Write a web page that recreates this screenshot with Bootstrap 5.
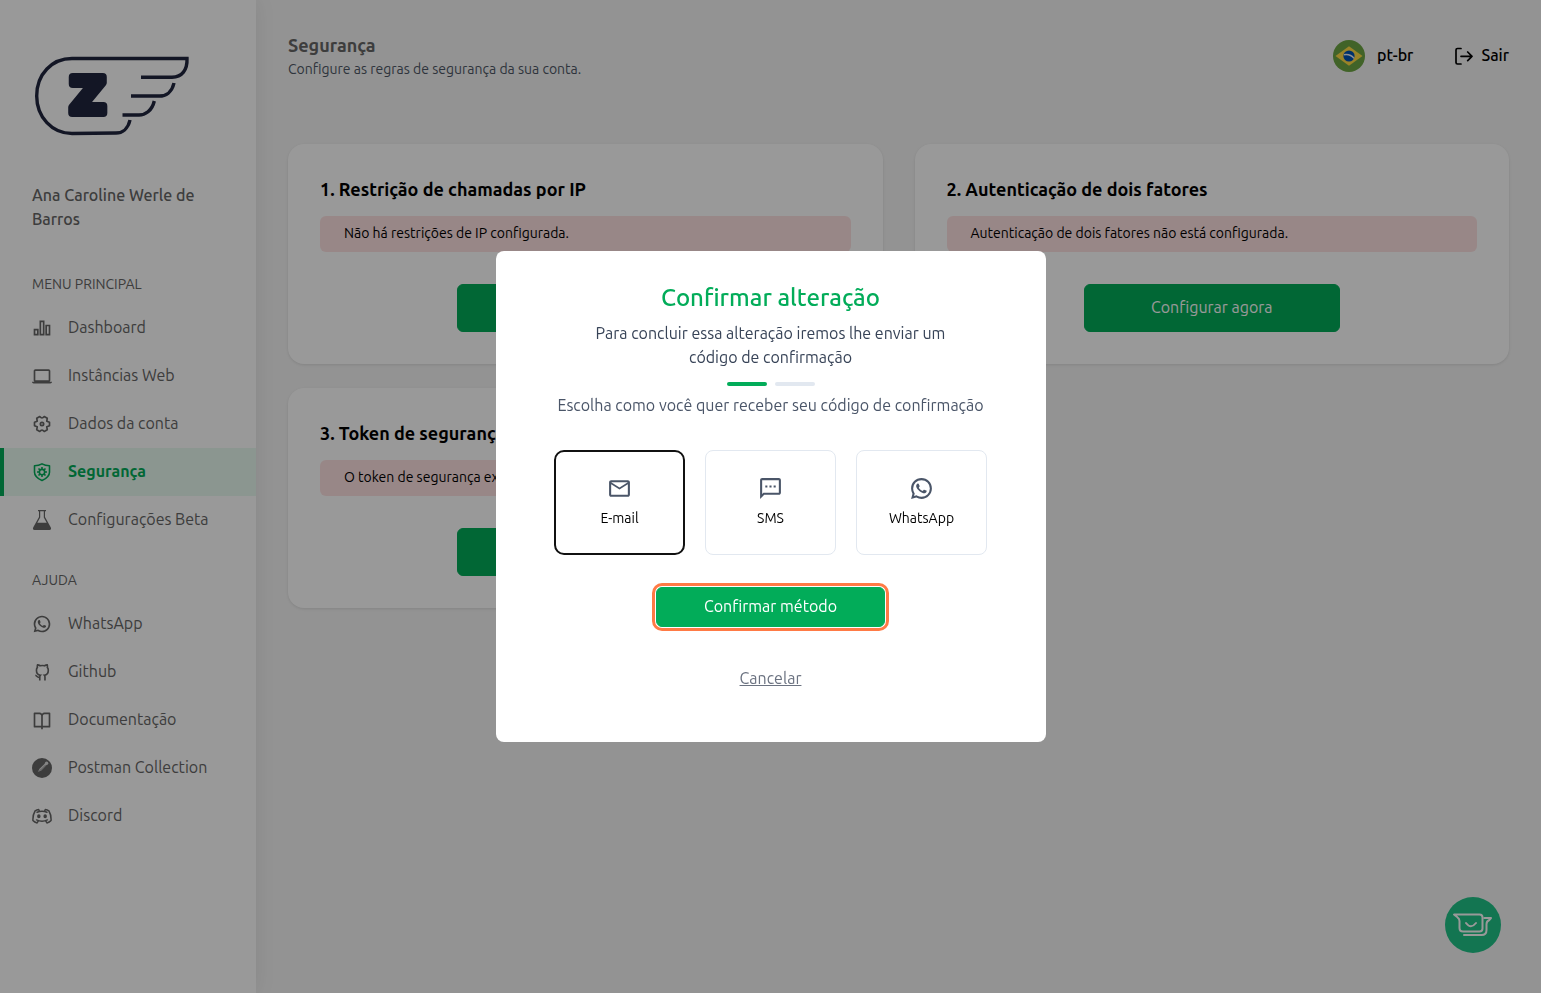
<!DOCTYPE html>
<html lang="pt-br">
<head>
<meta charset="utf-8">
<meta name="viewport" content="width=device-width, initial-scale=1">
<title>Segurança</title>
<link href="https://cdn.jsdelivr.net/npm/bootstrap@5.3.0/dist/css/bootstrap.min.css" rel="stylesheet">
<style>
  :root { --brand: #02ac59; }
  body { font-family: Ubuntu, "Open Sans", sans-serif; font-size: 16px; line-height: 24px; color: #000; background: #f5f5f5; }
  h1, h2, h3, p { margin: 0; }
  .fs-sm { font-size: 14px; line-height: 20px; }
  .side { width: 256px; padding-top: 48px; background: #fff; box-shadow: 0 0 20px rgba(0,0,0,.08); color: #666; }
  .brand-logo { display: block; margin-bottom: 39px; }
  .user-name { font-weight: 550; margin-bottom: 33px; }
  .side-label { padding: 8px 32px; font-size: 14px; line-height: 24px; }
  .side-nav { margin-bottom: 16px; }
  .side .nav-link { display: flex; align-items: center; gap: 16px; height: 48px; padding: 0 28px; border-left: 4px solid transparent; color: #666; }
  .side .nav-link.active { color: var(--brand); background: #e8fbf0; border-color: var(--brand); font-weight: 700; }
  .side .nav-link svg { width: 20px; height: 20px; }
  .side .nav-link span, .top-link span { padding-bottom: 2px; }
  .main-area { padding: 32px; }
  .page-head { height: 48px; margin-bottom: 64px; }
  .page-intro { padding-bottom: 2px; }
  .page-title { font-size: 18px; line-height: 28px; font-weight: 600; color: #666; }
  .page-desc { color: #4f5866; }
  .top-actions { gap: 40px; }
  .top-link { gap: 12px; color: #000; font-weight: 550; text-decoration: none; background: none; border: 0; padding: 0; }
  .top-link.exit { gap: 8px; }
  .panel-grid { display: grid; grid-template-columns: repeat(2, minmax(0, 1fr)); gap: 24px 32px; }
  .panel { background: #fff; border-radius: 16px; padding: 32px; box-shadow: 0 1px 3px rgba(0,0,0,.1); }
  .panel h2 { font-size: 18px; line-height: 26px; font-weight: 600; margin-bottom: 14px; }
  .notice { background: #fee2e2; border-radius: 6px; padding: 7px 24px 9px; font-size: 14px; line-height: 20px; margin-bottom: 32px; }
  .btn-brand { --bs-btn-color: #fff; --bs-btn-bg: var(--brand); --bs-btn-border-color: var(--brand); --bs-btn-hover-color: #fff; --bs-btn-hover-bg: #029a50; border-radius: 6px; line-height: 24px; padding-top: 6px; padding-bottom: 8px; }
  .btn-panel { width: 256px; height: 48px; }
  .chat-btn { position: fixed; right: 40px; bottom: 40px; width: 56px; height: 56px; border: 0; border-radius: 50%; padding: 0; background: #20c388; }
  .modal { background: rgba(0,0,0,.4); }
  .modal-dialog { max-width: 550px; }
  .modal-content { border: 0; border-radius: 8px; padding: 32px 32px 52px; align-items: center; text-align: center; }
  .modal-title { font-size: 24px; line-height: 30px; font-weight: 500; color: var(--brand); margin-bottom: 8px; }
  .dlg-text { max-width: 380px; color: #374357; margin-bottom: 13px; }
  .step { width: 40px; height: 4px; border-radius: 2px; background: #e2e8f0; }
  .step.on { background: var(--brand); }
  .hint { color: #4a5568; margin: 7px 0 33px; }
  .methods { display: grid; grid-template-columns: repeat(3, 131px); gap: 20px; margin-bottom: 32px; }
  .method { height: 105px; padding-bottom: 2px; border: 1px solid #e2e8f0; border-radius: 8px; gap: 7px; cursor: pointer; }
  .method svg { width: 25px; height: 25px; color: #4a5568; }
  .btn-check:checked + .method { border: 2px solid #111; border-radius: 10px; }
  .btn-confirm { width: 229px; height: 40px; padding-top: 5px; padding-bottom: 7px; line-height: 24px; margin-bottom: 39px; box-shadow: 0 0 0 1px #fff, 0 0 0 4px #ff7a45; }
  .cancel { color: #6b7280; background: none; border: 0; padding: 0; text-decoration: underline; }
</style>
</head>
<body>
<svg class="d-none" aria-hidden="true">
  <symbol id="i-wa" viewBox="0 0 24 24"><path fill="currentColor" d="M7.253 18.494l.724.423A7.953 7.953 0 0 0 12 20a8 8 0 1 0-8-8c0 1.436.377 2.813 1.084 4.024l.422.724-.653 2.401 2.4-.655zM2.004 22l1.352-4.968A9.954 9.954 0 0 1 2 12C2 6.477 6.477 2 12 2s10 4.477 10 10-4.477 10-10 10a9.954 9.954 0 0 1-5.03-1.355L2.004 22zM8.391 7.308c.134-.01.269-.01.403-.004.054.004.108.01.162.016.159.018.334.115.393.249.298.676.588 1.357.868 2.04.062.152.025.347-.093.537a4.38 4.38 0 0 1-.263.372c-.113.145-.356.411-.356.411s-.099.118-.061.265c.014.056.06.137.102.205l.059.095c.256.427.6.86 1.02 1.268.12.116.237.235.363.346.468.413.998.75 1.57 1l.005.002c.085.037.128.057.252.11.062.026.126.049.191.066a.35.35 0 0 0 .367-.13c.724-.877.79-.934.796-.934v.002a.482.482 0 0 1 .378-.127c.06.004.121.015.177.04.531.243 1.4.622 1.4.622l.582.261c.098.047.187.158.19.265.004.067.01.175-.013.373-.032.259-.11.57-.188.733a1.155 1.155 0 0 1-.21.302 2.378 2.378 0 0 1-.33.288 3.71 3.71 0 0 1-.125.09 5.024 5.024 0 0 1-.383.22 1.99 1.99 0 0 1-.833.23c-.185.01-.37.024-.556.014-.008 0-.568-.087-.568-.087a9.448 9.448 0 0 1-3.84-2.046c-.226-.199-.435-.413-.649-.626-.89-.885-1.562-1.84-1.97-2.742A3.47 3.47 0 0 1 6.9 9.62a2.729 2.729 0 0 1 .564-1.68c.073-.094.142-.192.261-.305.127-.12.207-.184.294-.228a.961.961 0 0 1 .371-.1z"/></symbol>
</svg>

<div class="d-flex min-vh-100">
  <aside class="side flex-shrink-0">
    <div class="px-4 mx-2">
      <svg class="brand-logo" width="160" height="96" viewBox="32 48 160 96" fill="none" stroke="#20263f" stroke-width="3.4" role="img" aria-label="Z-API">
        <path d="M130 120C128 129 122 133 116 133L72 133.500C52 133.500 36.700 117 36.700 96C36.700 74 52 58.500 72 58.500H187C187.500 70 182 77 172 77.200H141M174 83C172 92 166 96.500 158 96H131M154.300 101C152 111 145 115 139 115H122.500"/>
        <text x="70" y="113" font-family="DejaVu Sans" font-weight="700" font-size="49" fill="#20263f" stroke-width="8" stroke-linejoin="round">Z</text>
      </svg>
      <p class="user-name">Ana Caroline Werle de Barros</p>
    </div>
    <p class="side-label">MENU PRINCIPAL</p>
    <nav class="nav side-nav flex-column flex-nowrap">
      <a class="nav-link" href="#"><svg viewBox="0 0 24 24" fill="currentColor"><path fill-rule="evenodd" d="M2 13h6v8H2v-8zm14-5h6v13h-6V8zM9 3h6v18H9V3zM4 15v4h2v-4H4zm7-10v14h2V5h-2zm7 5v9h2v-9h-2z"/></svg><span>Dashboard</span></a>
      <a class="nav-link" href="#"><svg viewBox="0 0 24 24" fill="currentColor"><path fill-rule="evenodd" d="M20 19c1.100 0 2-.9 2-2V6c0-1.100-.9-2-2-2H4c-1.100 0-2 .9-2 2v11c0 1.100.9 2 2 2H0c0 1.100.9 2 2 2h20c1.100 0 2-.9 2-2zM4 6h16v11H4z"/></svg><span>Instâncias Web</span></a>
      <a class="nav-link" href="#"><svg viewBox="0 0 24 24" fill="none" stroke="currentColor" stroke-width="2" stroke-linejoin="round"><path d="M21 10v4L17.700 15.300 18.300 18.800 14.700 20.900Q12 17.600 9.300 20.900L5.700 18.800 6.300 15.300 3 14V10L6.300 8.700 5.700 5.200 9.300 3.100Q12 6.400 14.700 3.100L18.300 5.200 17.700 8.700Z"/><circle cx="12" cy="12" r="2"/></svg><span>Dados da conta</span></a>
      <a class="nav-link active" aria-current="page" href="#"><svg viewBox="0 0 24 24" fill="none" stroke="currentColor" stroke-width="1.900"><path stroke-linejoin="round" d="M12 2.200c2.600 1.500 5.600 2.300 9 2.300v7.700c0 4.300-3.800 7.600-9 10-5.200-2.400-9-5.700-9-10V4.500c3.400 0 6.400-.8 9-2.300z"/><circle cx="12" cy="12" r="3.200"/><path d="M12 6v2.800M12 15.200V18M6 12h2.800M15.200 12H18M7.800 7.800l2 2M14.200 14.200l2 2M16.200 7.800l-2 2M9.800 14.200l-2 2"/></svg><span>Segurança</span></a>
      <a class="nav-link" href="#"><svg viewBox="0 0 20 20" fill="currentColor"><path fill-rule="evenodd" d="M6 0h8v1.300h-1V7l5.700 10.200c.8 1.400.2 2.800-1.200 2.800h-15C1.100 20 .5 18.600 1.300 17.200L7 7V1.300H6zM8.200 1.300v6.100L5.300 12.800h9.400L11.800 7.400V1.300z"/></svg><span>Configurações Beta</span></a>
    </nav>
    <p class="side-label">AJUDA</p>
    <nav class="nav side-nav flex-column flex-nowrap">
      <a class="nav-link" href="#"><svg><use href="#i-wa"/></svg><span>WhatsApp</span></a>
      <a class="nav-link" href="#"><svg viewBox="-2 -1 27 25" fill="none" stroke="currentColor" stroke-width="2.200"><path d="M9 18.500c-4 1.300-4.200-2.300-6.500-2.700M15.500 23v-4.600c0-1.200-.3-2-.9-2.600 3.100-.4 5.400-1.800 5.400-6.800 0-1.600-.4-2.800-1.300-3.800.3-1.200.2-2.400-.2-3.400-1.200 0-2.400.5-3.500 1.300a12.500 12.500 0 0 0-6 0C7.900 2.300 6.700 1.800 5.500 1.800c-.4 1-.5 2.200-.2 3.400C4.400 6.200 4 7.400 4 9c0 5 2.300 6.400 5.400 6.800-.6.600-.9 1.400-.9 2.600V23"/></svg><span>Github</span></a>
      <a class="nav-link" href="#"><svg viewBox="0 0 24 24" fill="currentColor"><path fill-rule="evenodd" d="M13 21v2h-2v-2H3a1 1 0 0 1-1-1V4a1 1 0 0 1 1-1h6a3.990 3.990 0 0 1 3 1.354A3.990 3.990 0 0 1 15 3h6a1 1 0 0 1 1 1v16a1 1 0 0 1-1 1h-8zm7-2V5h-5a2 2 0 0 0-2 2v12h7zm-9 0V7a2 2 0 0 0-2-2H4v14h7z"/></svg><span>Documentação</span></a>
      <a class="nav-link" href="#"><svg viewBox="0 0 20 20" fill="currentColor"><circle cx="10" cy="10" r="10"/><path d="M13.200 5.200l1.600 1.500-5.200 5.500-3.900 2.100 1.900-3.500z" fill="#ddd"/><circle cx="14.600" cy="5.300" r="1.700" fill="#ddd"/><path d="M4.500 15.500l4-3.400 5-5" stroke="#666" stroke-width=".6" fill="none"/></svg><span>Postman Collection</span></a>
      <a class="nav-link" href="#"><svg viewBox="0 0 24 24" fill="none" stroke="currentColor" stroke-width="1.800" stroke-linejoin="round" stroke-linecap="round"><path d="M8 4.200c-1.600.2-3 .7-4.200 1.500C1.800 9 .9 12.800 1.100 17.500c1.400 1.500 3.100 2.400 5 2.800l1.500-2.500M16 4.200c1.600.2 3 .7 4.200 1.500 2 3.300 2.900 7.100 2.700 11.800-1.400 1.500-3.100 2.400-5 2.800l-1.500-2.500M6 7.500c4-1.600 8-1.600 12 0M5.500 16.700c4.300 2 8.700 2 13 0M8 4.200l.8 1.800M16 4.200l-.8 1.800"/><ellipse cx="8.200" cy="12.300" rx="1.200" ry="1.400" fill="currentColor"/><ellipse cx="15.800" cy="12.300" rx="1.200" ry="1.400" fill="currentColor"/></svg><span>Discord</span></a>
    </nav>
  </aside>

  <main class="main-area flex-grow-1">
    <header class="page-head d-flex justify-content-between align-items-center">
      <div class="page-intro">
        <h1 class="page-title">Segurança</h1>
        <p class="page-desc fs-sm">Configure as regras de segurança da sua conta.</p>
      </div>
      <div class="top-actions d-flex align-items-center">
        <button type="button" class="top-link d-flex align-items-center">
          <svg width="32" height="32" viewBox="0 0 32 32"><circle cx="16" cy="16" r="16" fill="#6da544"/><path d="M16 6.300L29.500 16 16 25.700 2.500 16z" fill="#ffda44"/><circle cx="16" cy="16" r="5.600" fill="#0052b4"/><path d="M11 14.700c4-.6 7.600.5 10 3.700" fill="none" stroke="#f0f0f0" stroke-width="1.500"/></svg>
          <span>pt-br</span>
        </button>
        <a class="top-link exit d-flex align-items-center" href="#">
          <svg width="20" height="20" viewBox="0 0 20 20" fill="none" stroke="#000" stroke-width="1.700" stroke-linecap="round" stroke-linejoin="round"><path d="M8 2.500H4.500A1.500 1.500 0 0 0 3 4v12.500A1.500 1.500 0 0 0 4.500 18H8M8 10.300h11M14.700 6l4.300 4.300-4.300 4.300"/></svg>
          <span>Sair</span>
        </a>
      </div>
    </header>

    <div class="panel-grid">
      <section class="panel">
        <h2>1. Restrição de chamadas por IP</h2>
        <p class="notice">Não há restrições de IP configurada.</p>
        <button type="button" class="btn btn-brand btn-panel d-block mx-auto">Configurar agora</button>
      </section>
      <section class="panel">
        <h2>2. Autenticação de dois fatores</h2>
        <p class="notice">Autenticação de dois fatores não está configurada.</p>
        <button type="button" class="btn btn-brand btn-panel d-block mx-auto">Configurar agora</button>
      </section>
      <section class="panel">
        <h2>3. Token de segurança</h2>
        <p class="notice">O token de segurança expirou.</p>
        <button type="button" class="btn btn-brand btn-panel d-block mx-auto">Configurar agora</button>
      </section>
    </div>
  </main>
</div>

<button type="button" class="chat-btn" aria-label="Chat">
  <svg width="56" height="56" viewBox="0 0 56 56" fill="none" stroke="#fff" stroke-width="2" stroke-linejoin="round" stroke-linecap="round"><path d="M9 17.500h25.500q3 0 3 3v11q0 3-3 3H18q-3.500 0-3.500-3.500V24q0-2.500-2-3.700zM39.500 21H46l-2 2.300q-2.500 1-2.500 4V33q0 5-5 5H19M21 26q4.800 6.500 10 0"/></svg>
</button>

<div class="modal d-block" tabindex="-1" role="dialog" aria-modal="true" aria-labelledby="dlg-title">
  <div class="modal-dialog modal-dialog-centered">
    <form class="modal-content">
      <h2 class="modal-title" id="dlg-title">Confirmar alteração</h2>
      <p class="dlg-text">Para concluir essa alteração iremos lhe enviar um código de confirmação</p>
      <div class="d-flex gap-2"><span class="step on"></span><span class="step"></span></div>
      <p class="hint">Escolha como você quer receber seu código de confirmação</p>
      <div class="methods">
        <input class="btn-check" type="radio" name="method" id="m-mail" checked>
        <label class="method fs-sm d-flex flex-column align-items-center justify-content-center" for="m-mail"><svg viewBox="0 0 24 24" fill="currentColor"><path fill-rule="evenodd" d="M22 6c0-1.100-.9-2-2-2H4c-1.100 0-2 .9-2 2v12c0 1.100.9 2 2 2h16c1.100 0 2-.9 2-2V6zm-2 0l-8 5-8-5h16zm0 12H4V8l8 5 8-5v10z"/></svg>E-mail</label>
        <input class="btn-check" type="radio" name="method" id="m-sms">
        <label class="method fs-sm d-flex flex-column align-items-center justify-content-center" for="m-sms"><svg viewBox="0 0 24 24" fill="currentColor"><path fill-rule="evenodd" d="M20 2H4c-1.100 0-2 .9-2 2v18l4-4h14c1.100 0 2-.9 2-2V4c0-1.100-.9-2-2-2zm0 14H5.200L4 17.200V4h16v12zM7 9h2v2H7zM11 9h2v2h-2zM15 9h2v2h-2z"/></svg>SMS</label>
        <input class="btn-check" type="radio" name="method" id="m-wa">
        <label class="method fs-sm d-flex flex-column align-items-center justify-content-center" for="m-wa"><svg><use href="#i-wa"/></svg>WhatsApp</label>
      </div>
      <button type="button" class="btn btn-brand btn-confirm">Confirmar método</button>
      <button type="button" class="cancel">Cancelar</button>
    </form>
  </div>
</div>
<script src="https://cdn.jsdelivr.net/npm/bootstrap@5.3.0/dist/js/bootstrap.bundle.min.js"></script>
</body>
</html>
